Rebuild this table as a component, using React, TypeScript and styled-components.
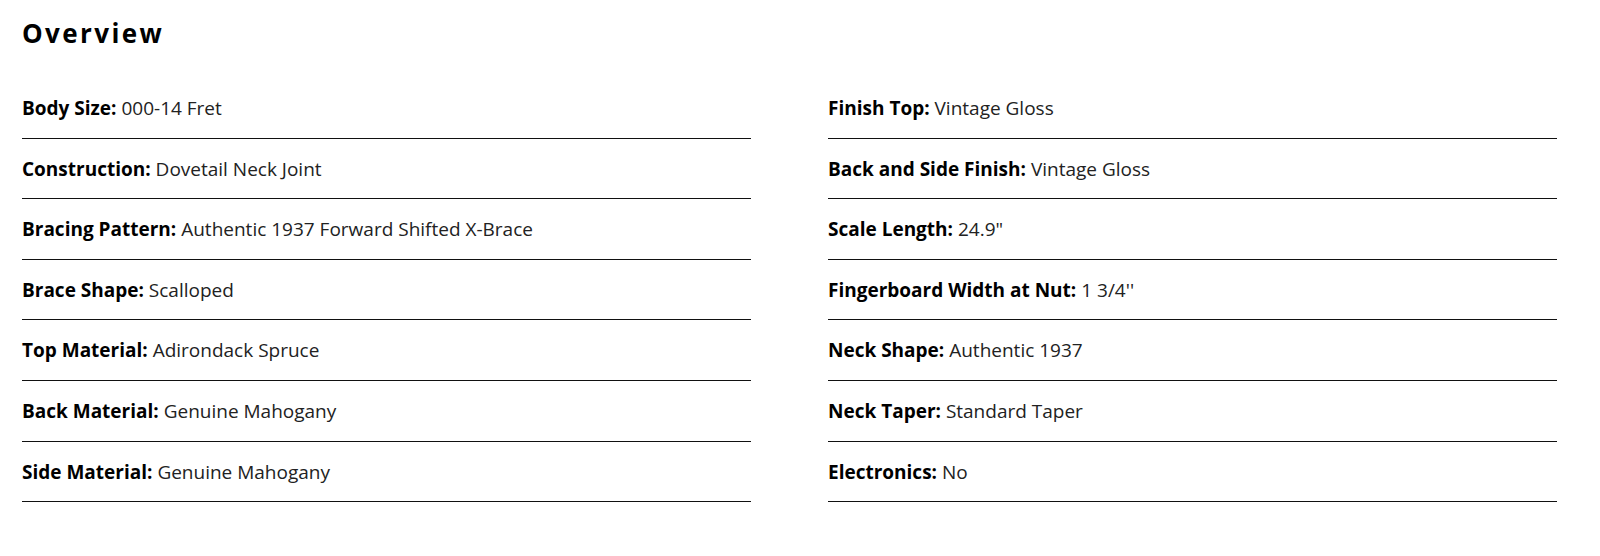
import React from "react";
import styled, { createGlobalStyle } from "styled-components";

const Global = createGlobalStyle`
  html, body { margin: 0; padding: 0; background: #fff; }
  body { font-family: "Open Sans", "Liberation Sans", sans-serif; color: #222; }
`;

const Page = styled.section`
  padding: 15px 43px 40px 22px;
`;

const Title = styled.h2`
  margin: 0;
  font-size: 26px;
  font-weight: 700;
  letter-spacing: 2.4px;
  color: #000;
  line-height: 36px;
  height: 63px;
`;

const Columns = styled.div`
  display: grid;
  grid-template-columns: 729px 729px;
  column-gap: 77px;
`;

const List = styled.ul`
  list-style: none;
  margin: 0;
  padding: 0;
`;

const Row = styled.li`
  padding: 17px 0 15.6px;
  border-bottom: 1px solid #111;
  font-size: 19px;
  line-height: 27px;
  color: #222;
`;

const Label = styled.strong`
  font-weight: 700;
  color: #000;
`;

const left: [string, string][] = [
  ["Body Size", "000-14 Fret"],
  ["Construction", "Dovetail Neck Joint"],
  ["Bracing Pattern", "Authentic 1937 Forward Shifted X-Brace"],
  ["Brace Shape", "Scalloped"],
  ["Top Material", "Adirondack Spruce"],
  ["Back Material", "Genuine Mahogany"],
  ["Side Material", "Genuine Mahogany"],
];

const right: [string, string][] = [
  ["Finish Top", "Vintage Gloss"],
  ["Back and Side Finish", "Vintage Gloss"],
  ["Scale Length", "24.9\""],
  ["Fingerboard Width at Nut", "1 3/4''"],
  ["Neck Shape", "Authentic 1937"],
  ["Neck Taper", "Standard Taper"],
  ["Electronics", "No"],
];

const SpecList = ({ items }: { items: [string, string][] }) => (
  <List>
    {items.map(([k, v]) => (
      <Row key={k}>
        <Label>{k}:</Label> {v}
      </Row>
    ))}
  </List>
);

export default function App() {
  return (
    <>
      <Global />
      <Page>
        <Title>Overview</Title>
        <Columns>
          <SpecList items={left} />
          <SpecList items={right} />
        </Columns>
      </Page>
    </>
  );
}
